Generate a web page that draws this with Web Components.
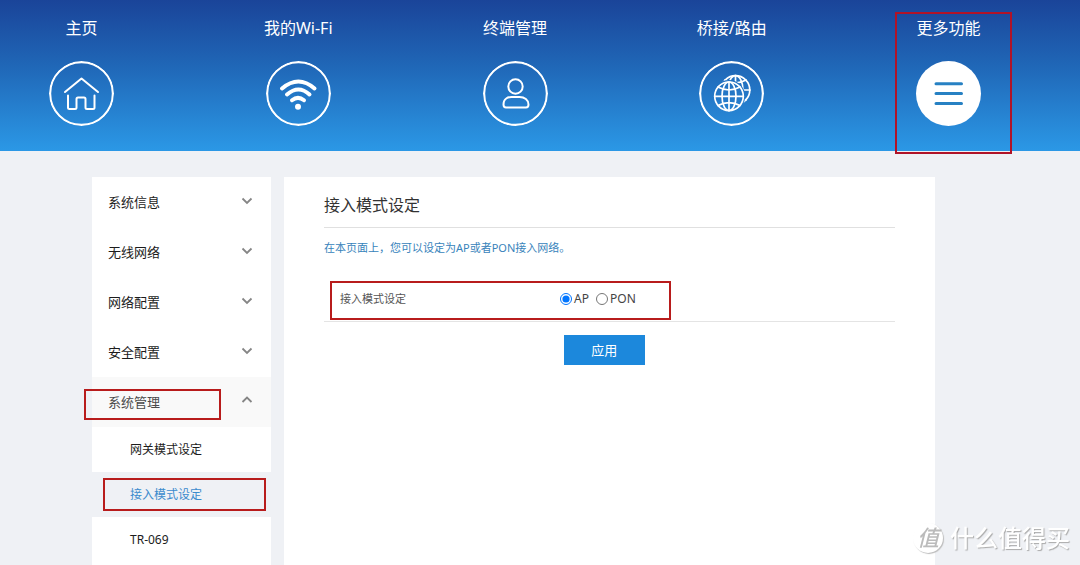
<!DOCTYPE html>
<html lang="zh-CN">
<head>
<meta charset="utf-8">
<meta name="viewport" content="width=device-width, initial-scale=1">
<title>接入模式设定</title>
<style>
  html { height: 100%; }
  body { margin: 0; min-height: 100%; display: flex; flex-direction: column; overflow: hidden;
    background: #eff1f5; color: #1c1c1c; font-family: "Noto Sans", "Noto Sans CJK SC", sans-serif; }
</style>
</head>
<body>
<top-nav>
  <nav-item label="主页" icon="home"></nav-item>
  <nav-item label="我的Wi-Fi" icon="wifi"></nav-item>
  <nav-item label="终端管理" icon="user"></nav-item>
  <nav-item label="桥接/路由" icon="globe"></nav-item>
  <nav-item label="更多功能" icon="menu" active></nav-item>
</top-nav>
<page-body>
  <side-menu slot="side">
    <menu-group label="系统信息"></menu-group>
    <menu-group label="无线网络"></menu-group>
    <menu-group label="网络配置"></menu-group>
    <menu-group label="安全配置"></menu-group>
    <menu-group label="系统管理" open>
      <menu-link>网关模式设定</menu-link>
      <menu-link active>接入模式设定</menu-link>
      <menu-link>TR-069</menu-link>
    </menu-group>
  </side-menu>
  <mode-panel></mode-panel>
</page-body>
<site-mark></site-mark>

<script>
const ICONS = {
  home: `<path d="M16 31 32.500 17.500 49 31"/><path d="M19 34.500V46.500q0 1.500 1.500 1.500H26q1.500 0 1.500-1.500V38q0-1.500 1.500-1.500h6q1.500 0 1.500 1.500v8.500q0 1.500 1.500 1.500h6q1.500 0 1.500-1.500v-12"/>`,
  wifi: `<g stroke-width="4"><path d="M16 27.500Q32.500 13.500 48.500 27.500"/><path d="M21 33.500Q32.500 23.500 43.500 33.500"/><path d="M26 39.200Q32 34.500 38 39.200"/></g><circle cx="32" cy="45.700" r="3" fill="currentColor" stroke="none"/>`,
  user: `<circle cx="32.500" cy="25.500" r="7.200"/><path d="M20.500 43.500C20.500 38 24.500 36 28.500 36h8c5 0 9 3 9 7.500 0 2-.8 3-2.500 3h-20c-1.700 0-2.500-1-2.500-3Z"/>`,
  globe: `<mask id="m" maskUnits="userSpaceOnUse" x="0" y="0" width="65" height="65"><path fill="#fff" stroke="none" d="M0 0h65v65H0z"/><circle cx="30" cy="35.300" r="16.200" fill="#000" stroke="none"/></mask>
    <g stroke-width="1.700"><circle cx="30" cy="35.300" r="14.300"/><ellipse cx="30" cy="35.300" rx="7" ry="14.300"/><path d="M30 21v28.600M15.700 35.300h28.600M19 26q11 6 22 0M19 44.600q11-6 22 0"/>
    <g mask="url(#m)"><circle cx="36.500" cy="29" r="14.300"/><ellipse cx="36.500" cy="29" rx="7.500" ry="14.300"/><path d="M36.500 14.700V43.300M22 29h29M26 19q10 6 21 0M26 39q10-6 21 0"/></g></g>`,
  menu: `<path stroke-width="3" d="M20 22.700h25.500M20 32.500h25.500M20 42.400h25.500"/>`
};

class Base extends HTMLElement {
  connectedCallback() {
    if (this.shadowRoot) return;
    this.attachShadow({ mode: 'open' }).innerHTML = this.render();
  }
}

customElements.define('top-nav', class extends Base {
  render() {
    return `<style>
      :host { display: block; background: linear-gradient(#1a4499, #2068b8 45%, #2b98e6); }
      nav { display: flex; justify-content: space-between; padding: 16px 99px 25px 49px; }
    </style><nav aria-label="主导航"><slot></slot></nav>`;
  }
});

customElements.define('nav-item', class extends Base {
  render() {
    return `<style>
      :host { display: block; position: relative; width: 65px; }
      a { display: flex; flex-direction: column; align-items: center; gap: 21px; color: #fff; text-decoration: none; }
      span { font-size: 16px; line-height: 24px; white-space: nowrap; }
      svg { display: block; width: 65px; height: 65px; border-radius: 50%; fill: none;
        stroke: currentColor; stroke-width: 2; stroke-linecap: round; stroke-linejoin: round; }
      :host([active]) svg { background: #fff; color: #2781c3; }
      :host([active])::after { content: ""; position: absolute; inset: -4px -31px -28px -21px; border: 2px solid #b01328; pointer-events: none; }
    </style><a href="#"><span>${this.getAttribute('label')}</span>
    <svg viewBox="0 0 65 65" aria-hidden="true">${this.hasAttribute('active') ? '' : '<circle cx="32.500" cy="32.500" r="31.400" stroke-width="2.200"/>'}${ICONS[this.getAttribute('icon')]}</svg></a>`;
  }
});

customElements.define('page-body', class extends Base {
  render() {
    return `<style>
      :host { display: flex; flex: 1; }
      main { flex: 1; display: flex; gap: 13px; padding: 26px 145px 0 92px; }
      ::slotted(mode-panel) { flex: 1; }
    </style><main><slot name="side"></slot><slot></slot></main>`;
  }
});

customElements.define('side-menu', class extends Base {
  render() {
    return `<style>:host { display: block; flex: 0 0 179px; background: #fff; }</style><slot></slot>`;
  }
});

customElements.define('menu-group', class extends Base {
  render() {
    const open = this.hasAttribute('open');
    return `<style>
      :host { display: block; position: relative; }
      button { display: flex; align-items: center; justify-content: space-between; width: 100%; height: 50px;
        padding: 0 18px 0 16px; border: 0; background: none; color: #1c1c1c; font: inherit; font-size: 13px; line-height: 20px; }
      svg { width: 12px; height: 12px; margin-bottom: 4px; fill: none; stroke: #858585; stroke-width: 1.800; }
      :host([open]) button { background: #f9f9f9; color: #4a4a4a; }
      :host([open])::after { content: ""; position: absolute; left: -8px; top: 12px; width: 133px; height: 27px; border: 2px solid #b81c1c; pointer-events: none; }
    </style><button type="button" aria-expanded="${open}"><span>${this.getAttribute('label')}</span>
    <svg viewBox="0 0 12 12" aria-hidden="true"><path d="${open ? 'M1.500 8 6 3.500 10.500 8' : 'M1.500 4.500 6 9l4.500-4.500'}"/></svg></button><slot></slot>`;
  }
});

customElements.define('menu-link', class extends Base {
  render() {
    return `<style>
      :host { display: block; position: relative; }
      a { display: block; padding-left: 38px; color: #1c1c1c; font-size: 12px; line-height: 45px; text-decoration: none; }
      :host([active]) a { background: #eff1f5; color: #3b8bcd; }
      :host([active])::after { content: ""; position: absolute; inset: 6px 5px 6px 11px; border: 2px solid #b81c1c; pointer-events: none; }
    </style><a href="#"><slot></slot></a>`;
  }
});

customElements.define('mode-panel', class extends Base {
  render() {
    return `<style>
      :host { display: block; background: #fff; padding: 6px 40px 0; }
      h1 { margin: 0; border-bottom: 1px solid #e0e0e0; color: #333; font-size: 16px; font-weight: 400; line-height: 44px; }
      p { margin: 0 0 8px; color: #3783bb; font-size: 11px; line-height: 40px; }
      .row { position: relative; display: flex; align-items: center; gap: 2px; height: 45px; border-bottom: 1px solid #e4e4e4; color: #555; }
      .row::after { content: ""; position: absolute; left: 6px; top: 5px; width: 337px; height: 35px; border: 2px solid #b81c1c; pointer-events: none; }
      #name { box-sizing: border-box; width: 41%; padding-left: 16px; font-size: 11px; line-height: 20px; }
      .choices { display: flex; gap: 7px; font-size: 12px; line-height: 20px; color: #444; }
      label { display: flex; align-items: center; gap: 2px; }
      input { width: 12px; height: 12px; margin: 0; }
      .apply { display: block; width: 81px; height: 30px; margin: 13px 0 0 42%; padding: 0; border: 0;
        background: #1c88dc; color: #fff; font: inherit; font-size: 13px; line-height: 30px; }
    </style>
    <h1>接入模式设定</h1>
    <p>在本页面上，您可以设定为AP或者PON接入网络。</p>
    <form>
      <div class="row"><span id="name">接入模式设定</span>
        <div class="choices" role="radiogroup" aria-labelledby="name">
          <label><input type="radio" name="mode" value="ap" checked>AP</label>
          <label><input type="radio" name="mode" value="pon">PON</label>
        </div>
      </div>
      <button class="apply" type="button">应用</button>
    </form>`;
  }
});

customElements.define('site-mark', class extends Base {
  render() {
    return `<style>
      :host { position: fixed; right: 10px; bottom: 11px; display: flex; align-items: center; gap: 7px;
        color: #fff; font-size: 24px; font-weight: 500; line-height: 32px; text-shadow: 1px 1px 1px #aaa; pointer-events: none; }
      .seal { width: 30px; height: 30px; border-radius: 50%; background: #fff; box-shadow: 1px 1px 1px #bbb;
        color: #bbb; font-size: 22px; line-height: 28px; text-align: center; text-shadow: none; font-style: italic; }
    </style><span class="seal">值</span><span>什么值得买</span>`;
  }
});
</script>
</body>
</html>
